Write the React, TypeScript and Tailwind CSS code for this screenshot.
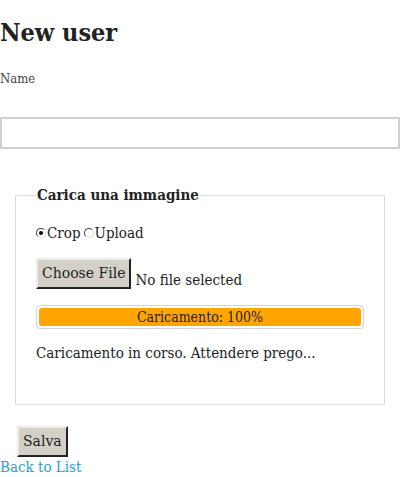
import React from "react";

const body = { fontFamily: '"DejaVu Serif Condensed", "DejaVu Serif", "Liberation Serif", serif', fontStretch: "semi-condensed" };
const btn = { fontFamily: '"DejaVu Serif", "Liberation Serif", serif', fontStretch: "normal" };

export default function App() {
  return (
    <div className="min-h-[477px] bg-white text-[#222]" style={body}>
      <h1 className="pt-[17px] text-[25px] font-bold leading-[32px]">New user</h1>

      <label className="mt-[22px] block text-[13px] leading-[16px] text-[#444]">Name</label>
      <input type="text" className="mt-[30px] block h-[32px] w-full border-2 border-[#d0d0d0] bg-white outline-none" />

      <fieldset className="mx-[15px] mt-[36px] h-[220px] border border-[#dcdcdc] px-[20px]">
        <legend className="px-[1px] text-[15px] font-bold leading-[20px]">Carica una immagine</legend>

        <div className="mt-[18px] flex items-center text-[15px] leading-[20px]">
          <span className="mr-[1px] inline-block h-[10px] w-[10px] rounded-full border border-b-[#ddd] border-l-[#444] border-r-[#ddd] border-t-[#444] bg-white p-[2px]">
            <span className="block h-full w-full rounded-full bg-black" />
          </span>
          <span>Crop</span>
          <span className="ml-[3px] mr-[1px] inline-block h-[10px] w-[10px] rounded-full border border-b-[#ddd] border-l-[#444] border-r-[#ddd] border-t-[#444] bg-white" />
          <span>Upload</span>
        </div>

        <div className="mt-[15px] flex items-end">
          <button
            type="button"
            style={btn}
            className="h-[31px] border-2 border-b-[#222] border-l-[#eeebe5] border-r-[#222] border-t-[#eeebe5] bg-[#d4d0c8] px-[4px] text-[14px]"
          >
            Choose File
          </button>
          <span className="ml-[4px] text-[15px] leading-[18px]">No file selected</span>
        </div>

        <div className="mt-[16px] rounded-[4px] border border-[#d4d4d4] p-[2px]">
          <div className="h-[18px] rounded-[3px] bg-[#ffa500] text-center text-[14px] leading-[18px]">Caricamento: 100%</div>
        </div>

        <p className="mt-[14px] text-[15px] leading-[20px]">Caricamento in corso. Attendere prego...</p>
      </fieldset>

      <button
        type="button"
        style={btn}
        className="ml-[17px] mt-[21px] h-[31px] border-2 border-b-[#222] border-l-[#eeebe5] border-r-[#222] border-t-[#eeebe5] bg-[#d4d0c8] px-[4px] text-[14px]"
      >
        Salva
      </button>
      <a href="#" className="mt-[2px] block text-[15px] leading-[16px] text-[#2a9fd0]">Back to List</a>
    </div>
  );
}
